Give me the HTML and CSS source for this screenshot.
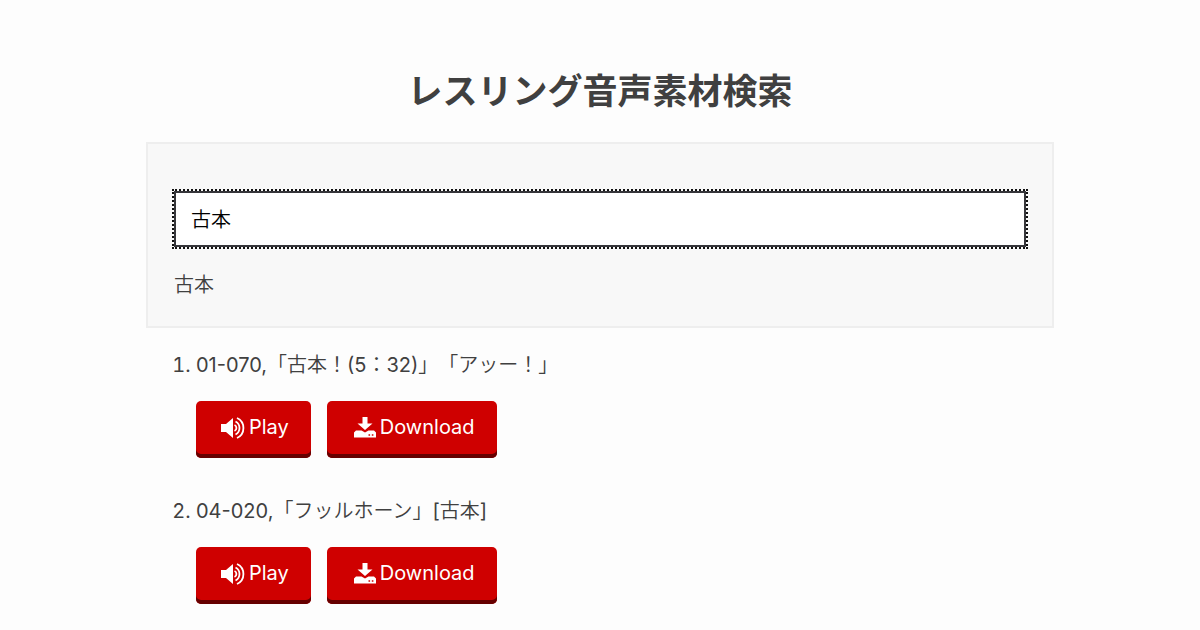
FILE: index.html
```html
<!DOCTYPE html>
<html lang="ja">
<head>
<meta charset="utf-8">
<meta name="viewport" content="width=device-width, initial-scale=1">
<title>レスリング音声素材検索</title>
<link rel="stylesheet" href="styles.css">
</head>
<body>
<svg class="sprite" aria-hidden="true">
  <symbol id="speaker" viewBox="0 0 24 22">
    <path fill="currentColor" d="M0 7h5l7-6v20L5 15H0z"/>
    <path fill="none" stroke="currentColor" stroke-width="1.800" d="M13.500 8a3.300 3.300 0 0 1 0 6M14.500 4.500a7.300 7.300 0 0 1 0 13M16 1a11 11 0 0 1 0 20"/>
  </symbol>
  <symbol id="download" viewBox="0 0 22 21">
    <path fill="currentColor" d="M8.500 0h5v6.500h5L11 13 3.500 6.500h5z"/>
    <path fill="currentColor" fill-rule="evenodd" d="M2 13.500h5.500l3.500 2 3.500-2H20l2 2v5H0v-5zM14.500 17.200v1.600h1.600v-1.600zM17.800 17.200v1.600h1.600v-1.600z"/>
  </symbol>
</svg>
<main class="page">
  <h1 class="title">レスリング音声素材検索</h1>
  <form class="search">
    <input class="search-input" type="text" value="古本" aria-label="検索">
    <output class="search-term">古本</output>
  </form>
  <ol class="results">
    <li class="result">
      <p class="result-text">01-070,「古本！(5：32)」「アッー！」</p>
      <div class="actions">
        <button class="button" type="button"><svg class="icon-speaker" aria-hidden="true"><use href="#speaker"/></svg>Play</button>
        <button class="button button-download" type="button"><svg class="icon-download" aria-hidden="true"><use href="#download"/></svg>Download</button>
      </div>
    </li>
    <li class="result">
      <p class="result-text">04-020,「フッルホーン」[古本]</p>
      <div class="actions">
        <button class="button" type="button"><svg class="icon-speaker" aria-hidden="true"><use href="#speaker"/></svg>Play</button>
        <button class="button button-download" type="button"><svg class="icon-download" aria-hidden="true"><use href="#download"/></svg>Download</button>
      </div>
    </li>
  </ol>
</main>
</body>
</html>
```
FILE: styles.css
```css
* { box-sizing: border-box; }

body {
  margin: 0;
  background: #fdfdfd;
  color: #404040;
  font: 400 20px/32px Inter, "Noto Sans CJK JP DemiLight", "Noto Sans CJK JP", sans-serif;
  text-spacing-trim: space-all;
}

.sprite { display: none; }

.page {
  max-width: 908px;
  margin: 0 auto;
  padding-top: 65px;
}

.title {
  margin: 0 0 25px;
  font-family: Inter, "Noto Sans CJK JP", sans-serif;
  font-size: 35px;
  font-weight: 700;
  line-height: 52px;
  text-align: center;
}

.search {
  padding: 47px 26px 25px;
  border: 2px solid #eee;
  background: #f8f8f8;
}

.search-input {
  display: block;
  width: 100%;
  height: 56px;
  margin-bottom: 22px;
  padding: 0 15px 2px;
  border: 2px solid #36363a;
  border-radius: 0;
  outline: 2px dotted #111;
  background: #fff;
  color: #000;
  font: inherit;
  font-weight: 350;
}

.search-term {
  display: block;
  font-weight: 350;
}

.results {
  margin: 0;
  padding: 21px 0 0 50px;
}

.result { margin-bottom: 37px; }

.result-text { margin: 0 0 20px; }

.actions {
  display: flex;
  flex-wrap: wrap;
  gap: 16px;
}

.button {
  display: flex;
  align-items: center;
  gap: 4px;
  height: 57px;
  padding: 0 22px 6px 25px;
  border: 0;
  border-radius: 5px;
  background: #cf0000;
  box-shadow: inset 0 -4px #660000;
  color: #fff;
  font: inherit;
}

.button-download { padding-left: 27px; }

.icon-speaker {
  width: 24px;
  height: 22px;
  margin-top: 2px;
}

.icon-download {
  width: 22px;
  height: 21px;
  margin-top: 2px;
}
```
